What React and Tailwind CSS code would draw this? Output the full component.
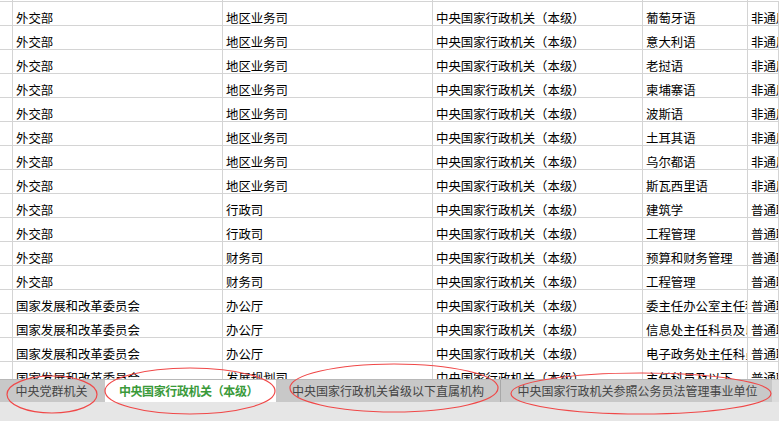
import React from "react";

const base = "中央国家行政机关（本级）";

const rows = [
  ["外交部", "地区业务司", base, "葡萄牙语", "非通用语职位"],
  ["外交部", "地区业务司", base, "意大利语", "非通用语职位"],
  ["外交部", "地区业务司", base, "老挝语", "非通用语职位"],
  ["外交部", "地区业务司", base, "柬埔寨语", "非通用语职位"],
  ["外交部", "地区业务司", base, "波斯语", "非通用语职位"],
  ["外交部", "地区业务司", base, "土耳其语", "非通用语职位"],
  ["外交部", "地区业务司", base, "乌尔都语", "非通用语职位"],
  ["外交部", "地区业务司", base, "斯瓦西里语", "非通用语职位"],
  ["外交部", "行政司", base, "建筑学", "普通职位"],
  ["外交部", "行政司", base, "工程管理", "普通职位"],
  ["外交部", "财务司", base, "预算和财务管理", "普通职位"],
  ["外交部", "财务司", base, "工程管理", "普通职位"],
  ["国家发展和改革委员会", "办公厅", base, "委主任办公室主任科员", "普通职位"],
  ["国家发展和改革委员会", "办公厅", base, "信息处主任科员及以下", "普通职位"],
  ["国家发展和改革委员会", "办公厅", base, "电子政务处主任科员", "普通职位"],
  ["国家发展和改革委员会", "发展规划司", base, "主任科员及以下", "普通职位"],
];

const cols = "grid grid-cols-[13px_210px_210px_210px_105px_1fr]";
const cell = "border-r border-[#d4d4d4] overflow-hidden whitespace-nowrap flex items-end pl-[3px] leading-[14px]";

function Row({ data }) {
  return (
    <div className={`${cols} h-[24px] border-t border-[#d4d4d4]`}>
      <div className={cell}></div>
      {data.map((t, i) => (
        <div key={i} className={cell}>{t}</div>
      ))}
    </div>
  );
}

function Tab({ label, active, className }) {
  return (
    <div
      className={`h-full flex items-center justify-center whitespace-nowrap ${
        active ? "bg-white text-[#3a9a3a] font-bold tracking-[-0.4px]" : "bg-[#c8c8c8] text-[#444]"
      } ${className}`}
    >
      {label}
    </div>
  );
}

export default function App() {
  return (
    <div
      className="relative w-[779px] h-[421px] overflow-hidden bg-white flex flex-col text-black"
      style={{ fontFamily: '"Noto Sans CJK SC", "Noto Sans", sans-serif' }}
    >
      <div className="h-[379px] overflow-hidden text-[12.4px]">
        <div className={`${cols} h-[1px]`}>
          <div className="border-r border-[#d4d4d4]"></div>
          <div className="border-r border-[#d4d4d4]"></div>
          <div className="border-r border-[#d4d4d4]"></div>
          <div className="border-r border-[#d4d4d4]"></div>
          <div className="border-r border-[#d4d4d4]"></div>
          <div></div>
        </div>
        {rows.map((r, i) => (
          <Row key={i} data={r} />
        ))}
      </div>

      <div className="h-[23px] flex text-[12px] bg-[#c8c8c8] border-t border-[#b8b8b8]">
        <Tab label="中央党群机关" className="w-[105px] pr-[2px]" />
        <Tab label="中央国家行政机关（本级）" active className="w-[171px] pr-[4px]" />
        <Tab label="中央国家行政机关省级以下直属机构" className="w-[225px] border-r border-[#a8a8a8]" />
        <Tab label="中央国家行政机关参照公务员法管理事业单位" className="w-[271px] pl-[2px]" />
        <div className="flex-1 bg-[#dcdcdc]"></div>
      </div>
      <div className="flex-1 bg-[#e6e6e6]"></div>

      <svg className="absolute inset-0 pointer-events-none" width="779" height="421">
        <g fill="none" stroke="#f04848" strokeWidth="1.2">
          <ellipse cx="52" cy="394.5" rx="45" ry="18.5" />
          <ellipse cx="190" cy="391" rx="85" ry="23" />
          <ellipse cx="394" cy="388" rx="104" ry="24" />
          <ellipse cx="641" cy="393.5" rx="130" ry="20.5" />
        </g>
      </svg>
    </div>
  );
}
